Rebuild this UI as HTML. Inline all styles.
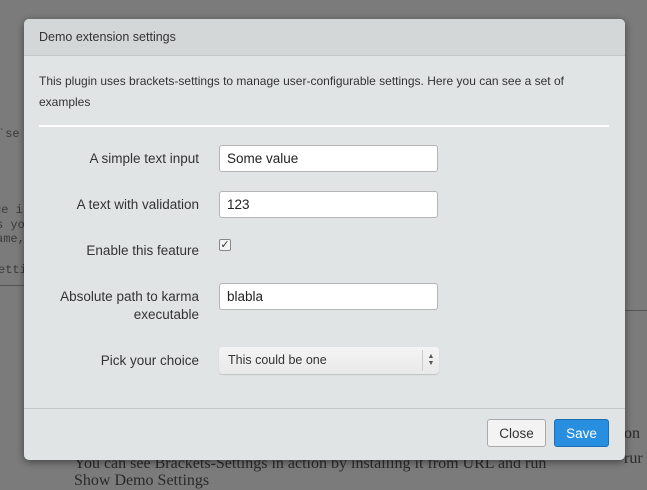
<!DOCTYPE html>
<html><head><style>
*{box-sizing:border-box;margin:0;padding:0}
body{width:647px;height:477px;background:#7b7b7b;position:relative;overflow:hidden;font-family:"Liberation Sans",sans-serif;}
.bg{position:absolute;font-family:"Liberation Mono",monospace;font-size:12px;color:#3a3a3a;}
.bgs{position:absolute;font-family:"Liberation Serif",serif;font-size:16px;color:#2a2a2a;}
.dlg{position:absolute;left:24px;top:19px;width:601px;height:441px;background:#e1e4e5;border-radius:5px;box-shadow:0 2px 8px rgba(0,0,0,.45);overflow:hidden;}
.hd{height:37px;background:#d4d7d8;border-bottom:1px solid #c3c6c7;font-size:12.5px;color:#333;padding:11px 0 0 15px;}
.intro{position:absolute;left:15px;top:52px;width:560px;font-size:12px;line-height:21px;color:#333;}
.sep{position:absolute;left:15px;top:106px;width:570px;height:2px;background:#fff;}
.lbl{position:absolute;right:426px;font-size:13.5px;color:#333;text-align:right;line-height:18px;}
.inp{position:absolute;left:195px;width:219px;height:27px;background:#fff;border:1px solid #b5b5b5;border-radius:3px;font-size:13.5px;color:#222;padding:5px 0 0 7px;}
.sel{position:absolute;left:195px;top:328px;width:220px;height:27px;border-radius:4px;background:linear-gradient(#f4f4f4,#e9e9e9);box-shadow:0 1px 1px rgba(0,0,0,.15);font-size:12.5px;color:#333;padding:6px 0 0 9px;}
.sel .ar{position:absolute;right:0;top:3px;width:17px;height:21px;border-left:1px solid #ccc;font-size:7px;line-height:7px;text-align:center;color:#555;padding-top:3px;}
.ft{position:absolute;left:0;top:389px;width:601px;border-top:1px solid #c5c8c9;height:52px;}
.btn{position:absolute;top:400px;height:28px;border-radius:3px;font-size:13.5px;text-align:center;padding-top:6px;}
</style></head><body>
<div class="bg" style="left:-2px;top:127px">`se</div>
<div class="bg" style="left:-6px;top:203px">ge i</div>
<div class="bg" style="left:-4px;top:218px">s yo</div>
<div class="bg" style="left:-4px;top:232px">ame,</div>
<div class="bg" style="left:-2px;top:263px">etti</div>
<div style="position:absolute;left:0;top:285px;width:24px;height:1px;background:#555"></div>
<div style="position:absolute;left:625px;top:310px;width:22px;height:1px;background:#555"></div>
<div class="bgs" style="left:624px;top:425px">on</div>
<div class="bgs" style="left:624px;top:450px">rur</div>
<div class="bgs" style="left:74px;top:455px">You can see Brackets-Settings in action by installing it from URL and run</div>
<div class="bgs" style="left:74px;top:472px">Show Demo Settings</div>
<div class="dlg">
<div class="hd">Demo extension settings</div>
<div class="intro">This plugin uses brackets-settings to manage user-configurable settings. Here you can see a set of examples</div>
<div class="sep"></div>
<div class="lbl" style="top:131px">A simple text input</div>
<div class="inp" style="top:126px">Some value</div>
<div class="lbl" style="top:177px">A text with validation</div>
<div class="inp" style="top:172px">123</div>
<div class="lbl" style="top:223px">Enable this feature</div>
<div style="position:absolute;left:195px;top:220px;width:12px;height:12px;border:1px solid #888;border-radius:2px;background:#f4f4f4;font-size:11px;line-height:10px;text-align:center;color:#333">✓</div>
<div class="lbl" style="top:269px">Absolute path to karma<br>executable</div>
<div class="inp" style="top:264px">blabla</div>
<div class="lbl" style="top:333px">Pick your choice</div>
<div class="sel">This could be one<div class="ar">▲<br>▼</div></div>
<div class="ft"></div>
<div class="btn" style="left:463px;width:59px;background:#f3f3f3;border:1px solid #aaa;color:#333">Close</div>
<div class="btn" style="left:530px;width:55px;background:#288edf;border:1px solid #1c6fb5;color:#fff">Save</div>
</div>
</body></html>
